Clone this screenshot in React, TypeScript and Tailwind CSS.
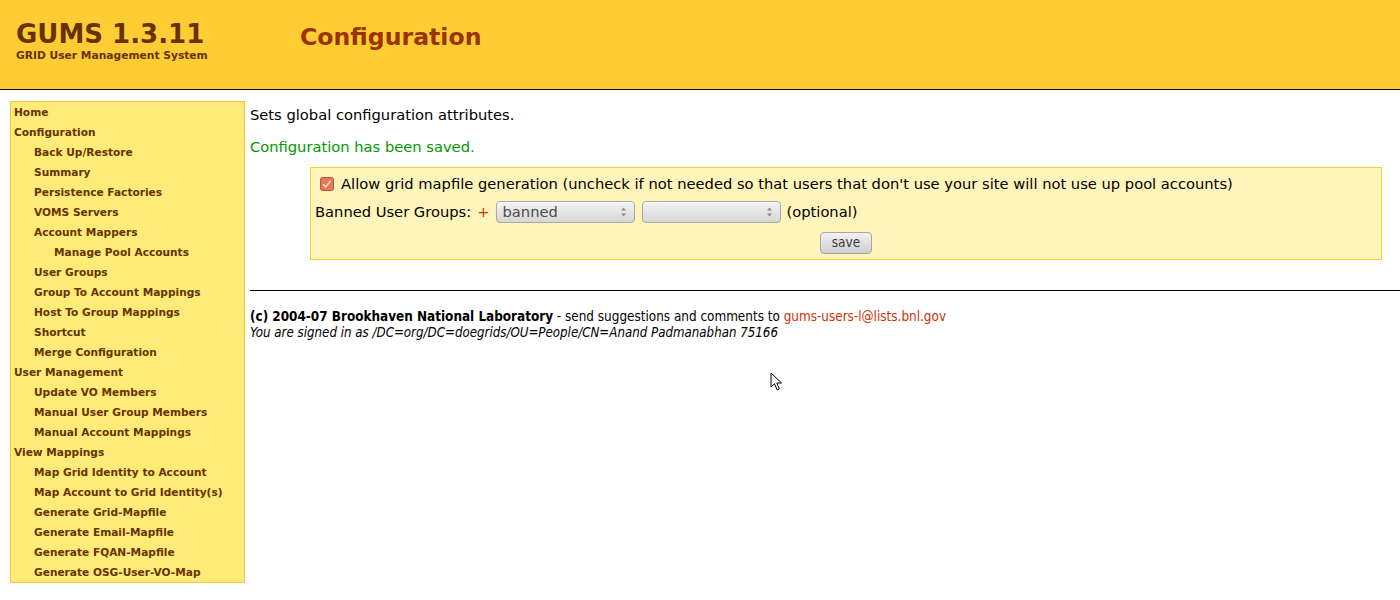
import React from "react";

const items: [string, number][] = [
  ["Home", 0],
  ["Configuration", 0],
  ["Back Up/Restore", 1],
  ["Summary", 1],
  ["Persistence Factories", 1],
  ["VOMS Servers", 1],
  ["Account Mappers", 1],
  ["Manage Pool Accounts", 2],
  ["User Groups", 1],
  ["Group To Account Mappings", 1],
  ["Host To Group Mappings", 1],
  ["Shortcut", 1],
  ["Merge Configuration", 1],
  ["User Management", 0],
  ["Update VO Members", 1],
  ["Manual User Group Members", 1],
  ["Manual Account Mappings", 1],
  ["View Mappings", 0],
  ["Map Grid Identity to Account", 1],
  ["Map Account to Grid Identity(s)", 1],
  ["Generate Grid-Mapfile", 1],
  ["Generate Email-Mapfile", 1],
  ["Generate FQAN-Mapfile", 1],
  ["Generate OSG-User-VO-Map", 1],
];

const indent = ["pl-[3px]", "pl-[23px]", "pl-[43px]"];

function Arrows() {
  return (
    <svg width="7" height="12" viewBox="0 0 7 12" className="shrink-0">
      <path d="M1 4.5 L3.5 1.5 L6 4.5 Z" fill="#8a8a8a" />
      <path d="M1 7.5 L3.5 10.5 L6 7.5 Z" fill="#8a8a8a" />
    </svg>
  );
}

function Select({ value }: { value: string }) {
  return (
    <div className="flex h-[22px] w-[139px] items-center justify-between rounded-[4px] border border-[#a8a8a8] bg-gradient-to-b from-[#f4f4f4] to-[#d6d6d6] pl-[6px] pr-[7px] text-[#4a4a4a] shadow-[inset_0_1px_0_#ffffff]">
      <span className="leading-none">{value}</span>
      <Arrows />
    </div>
  );
}

export default function App() {
  return (
    <div className="relative min-h-[600px] bg-white font-['DejaVu_Sans',sans-serif] text-black">
      <div className="flex h-[90px] items-start border-b border-black bg-[#ffcc33]">
        <div className="ml-[16px] mt-[19px] w-[284px]">
          <div className="text-[26px] font-bold leading-[30px] text-[#663300]">GUMS 1.3.11</div>
          <div className="text-[10.7px] font-bold leading-[13px] text-[#663300]">GRID User Management System</div>
        </div>
        <div className="mt-[22px] text-[23.6px] font-bold leading-[30px] text-[#993300]">Configuration</div>
      </div>

      <div className="flex items-start">
        <div className="ml-[10px] mt-[11px] w-[235px] border border-[#f6c53a] bg-[#ffeb77]">
          {items.map(([label, lvl]) => (
            <div
              key={label}
              className={`h-[20px] text-[10.6px] font-bold leading-[20px] text-[#663300] ${indent[lvl]}`}
            >
              {label}
            </div>
          ))}
        </div>

        <div className="ml-[5px] mt-[11px] flex-1 text-[14.7px]">
          <p className="mt-[5px] leading-[18px]">Sets global configuration attributes.</p>
          <p className="mt-[14px] leading-[18px] text-[#009900]">Configuration has been saved.</p>

          <div className="ml-[60px] mt-[11px] h-[93px] w-[1072px] border border-[#ffcc33] bg-[#fff5bb] px-[4px] pt-[6px]">
            <div className="flex h-[20px] items-center">
              <svg width="14" height="14" viewBox="0 0 14 14" className="ml-[5px] mr-[7px] shrink-0">
                <rect x="0.5" y="0.5" width="13" height="13" rx="2" fill="#e27a5a" stroke="#b9553a" />
                <path d="M3.2 7.2 L5.8 10 L10.8 3.6" fill="none" stroke="#f3d6c8" strokeWidth="1.6" />
              </svg>
              <span className="leading-none">
                Allow grid mapfile generation (uncheck if not needed so that users that don't use your site will not use up pool accounts)
              </span>
            </div>
            <div className="mt-[7px] flex h-[22px] items-center">
              <span className="leading-none">Banned User Groups:</span>
              <span className="ml-[6px] mr-[6px] leading-none text-[#cc3300]">+</span>
              <Select value="banned" />
              <div className="ml-[7px]">
                <Select value="" />
              </div>
              <span className="ml-[6px] leading-none">(optional)</span>
            </div>
            <div className="mt-[9px] flex justify-center">
              <div className="flex h-[22px] w-[52px] items-center justify-center rounded-[4px] border border-[#a8a8a8] bg-gradient-to-b from-[#f2f2f2] to-[#cfcfcf] text-[13.5px] leading-none text-[#3c3c3c] [font-stretch:condensed]">
                save
              </div>
            </div>
          </div>

          <div className="mt-[30px] h-px bg-black" />

          <div className="mt-[18px] font-['DejaVu_Sans_Condensed','DejaVu_Sans',sans-serif] text-[13.4px] leading-[16px] [font-stretch:condensed]">
            <div>
              <span className="font-bold">(c) 2004-07 Brookhaven National Laboratory</span> - send suggestions and
              comments to <span className="text-[#cc3300]">gums-users-l@lists.bnl.gov</span>
            </div>
            <div className="text-[13.2px] italic">You are signed in as /DC=org/DC=doegrids/OU=People/CN=Anand Padmanabhan 75166</div>
          </div>
        </div>
      </div>

      <svg width="13" height="20" viewBox="0 0 13 20" className="absolute left-[770px] top-[372px]">
        <path d="M1 1 L1 15 L4.5 11.8 L7.2 18 L9.4 17 L6.8 11 L11.5 11 Z" fill="#ffffff" stroke="#000000" strokeWidth="1" strokeLinejoin="round" />
      </svg>
    </div>
  );
}
